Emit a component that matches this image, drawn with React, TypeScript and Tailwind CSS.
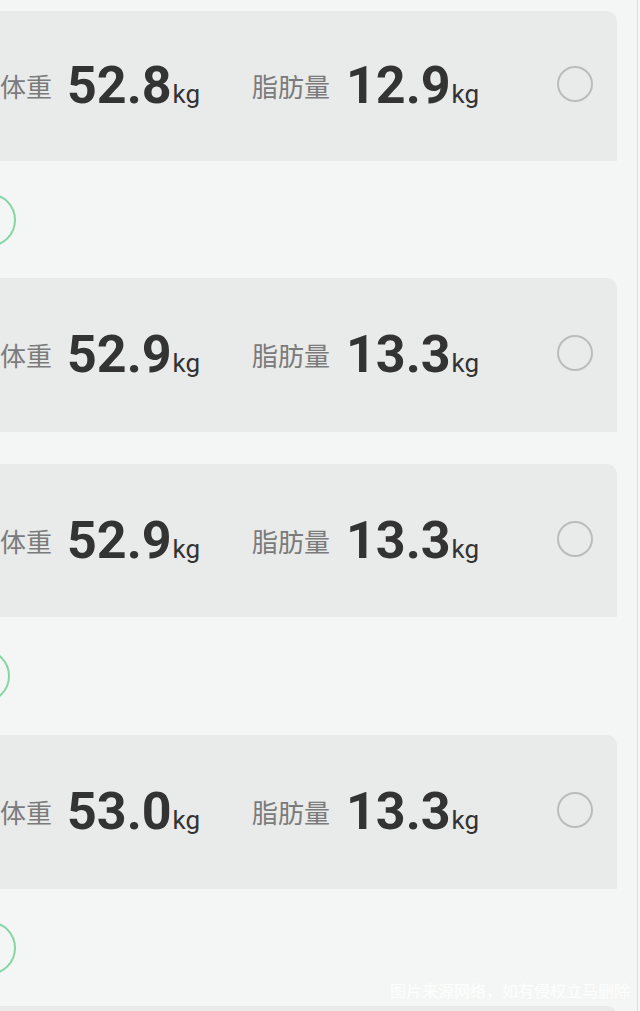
const cn = '"Noto Sans CJK SC", "Noto Sans", sans-serif';
const num = 'Roboto, "Liberation Sans", sans-serif';

type Rec = { weight: string; fat: string; h: string };

const Value = ({ v }: { v: string }) => (
  <div className="flex items-baseline text-[#333]" style={{ fontFamily: num }}>
    <span className="text-[52px] font-bold leading-none">{v}</span>
    <span className="ml-[1px] text-[26px] leading-none">kg</span>
  </div>
);

const Card = ({ weight, fat, h }: Rec) => (
  <div className={`${h} bg-[#e9eaea] rounded-tr-[10px] flex items-center`}>
    <div className="w-[252px] flex items-center">
      <span className="w-[52px] text-[26px] leading-none text-[#7b7b7b]" style={{ fontFamily: cn }}>
        体重
      </span>
      <div className="ml-[15px]">
        <Value v={weight} />
      </div>
    </div>
    <div className="flex items-center">
      <span className="w-[80px] text-[26px] leading-none text-[#7b7b7b]" style={{ fontFamily: cn }}>
        脂肪量
      </span>
      <div className="ml-[14px]">
        <Value v={fat} />
      </div>
    </div>
    <div className="ml-auto mr-6 mb-1 w-9 h-9 rounded-full border-2 border-[#bcbcbc]" />
  </div>
);

const Node = ({ h, shift }: { h: string; shift: string }) => (
  <div className={`${h} flex items-center`}>
    <div className={`${shift} w-[54px] h-[54px] rounded-full border-2 border-[#84d6a0] shrink-0`} />
  </div>
);

export default function App() {
  return (
    <div className="relative w-[640px] h-[1011px] overflow-hidden bg-[#f4f6f5] flex">
      <div className="w-[617px] flex flex-col pt-[11px]">
        <Card weight="52.8" fat="12.9" h="h-[150px] shrink-0" />
        <Node h="h-[117px] shrink-0" shift="-ml-[38px]" />
        <Card weight="52.9" fat="13.3" h="h-[154px] shrink-0" />
        <div className="h-[32px] shrink-0" />
        <Card weight="52.9" fat="13.3" h="h-[153px] shrink-0" />
        <Node h="h-[118px] shrink-0" shift="-ml-[44px]" />
        <Card weight="53.0" fat="13.3" h="h-[154px] shrink-0" />
        <Node h="h-[117px] shrink-0" shift="-ml-[38px]" />
        <div className="h-[154px] shrink-0 bg-[#e9eaea] rounded-tr-[10px]" />
      </div>
      <div className="w-[20px]" />
      <div className="w-[1px] bg-[#dcdedd]" />
      <div className="flex-1 bg-[#f7f7f7]" />
      <div
        className="absolute left-[390px] top-[980px] text-[16px] leading-[20px] text-white/80 whitespace-nowrap"
        style={{ fontFamily: cn }}
      >
        图片来源网络，如有侵权立马删除
      </div>
    </div>
  );
}
